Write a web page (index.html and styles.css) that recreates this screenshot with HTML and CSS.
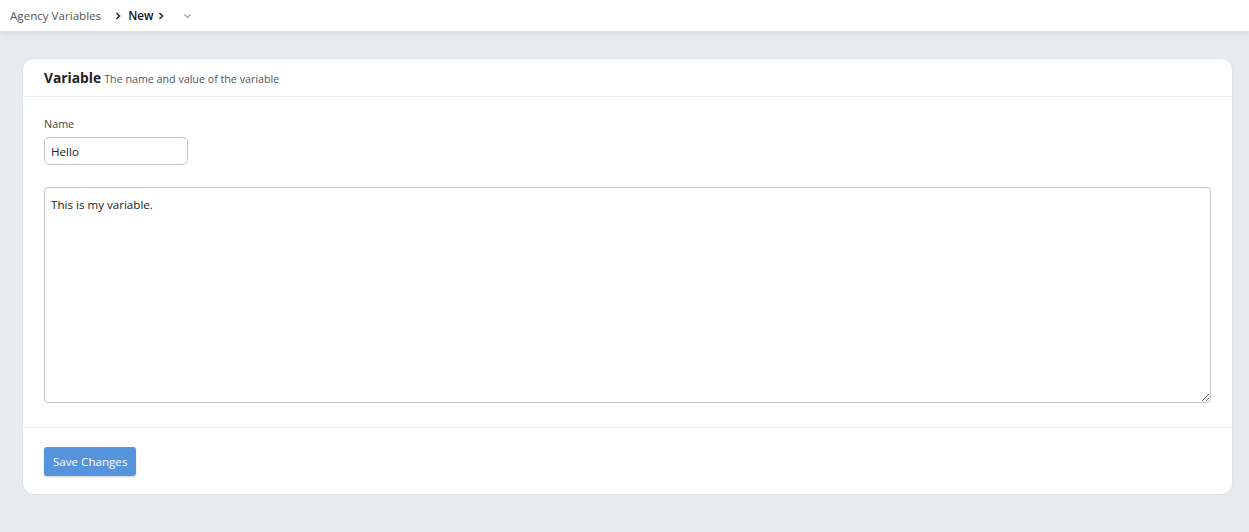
FILE: index.html
```html
<!DOCTYPE html>
<html lang="en">
<head>
    <meta charset="UTF-8">
    <meta name="viewport" content="width=device-width, initial-scale=1.0">
    <title>New Agency Variable</title>
    <link rel="stylesheet" href="styles.css">
</head>
<body>
    <div class="topbar">
        <span class="crumb">Agency Variables</span>
        <svg class="chev" width="8" height="8" viewBox="0 0 8 8"><path d="M2.5 1 L5.5 4 L2.5 7" fill="none" stroke="#333" stroke-width="1.7"/></svg>
        <span class="crumb current">New</span>
        <svg class="chev last" width="8" height="8" viewBox="0 0 8 8"><path d="M2.5 1 L5.5 4 L2.5 7" fill="none" stroke="#333" stroke-width="1.7"/></svg>
        <svg class="down" width="9" height="6" viewBox="0 0 9 6"><path d="M1.5 1.5 L4.5 4.5 L7.5 1.5" fill="none" stroke="#999" stroke-width="1.2"/></svg>
    </div>

    <div class="page">
        <div class="card">
            <div class="card-header">
                <span class="title">Variable</span>
                <span class="subtitle">The name and value of the variable</span>
            </div>
            <div class="card-body">
                <label class="label" for="name">Name</label>
                <input type="text" id="name" class="input" value="Hello">
                <textarea class="textarea">This is my variable.</textarea>
            </div>
            <div class="card-footer">
                <button class="btn">Save Changes</button>
            </div>
        </div>
    </div>
</body>
</html>
```

FILE: styles.css
```css
body {
    margin: 0;
    font-family: "Open Sans", "Noto Sans", sans-serif;
    background: #e8ebee;
    color: #222;
}
.topbar {
    height: 31px;
    background: #fff;
    display: flex;
    align-items: center;
    padding: 0 10px;
    box-shadow: 0 2px 6px rgba(0, 0, 0, 0.08);
    font-size: 11.6px;
}
.crumb {
    color: #555;
}
.crumb.current {
    color: #111;
    font-weight: 600;
}
.chev {
    margin: 0 6px 0 13px;
}
.chev.last {
    margin-left: 4px;
}
.down {
    margin-left: 12px;
}
.page {
    padding: 27px 16px 38px 22px;
}
.card {
    background: #fff;
    border-radius: 12px;
    border: 1px solid #e0e3e8;
}
.card-header {
    height: 37px;
    padding: 0 21px;
    display: flex;
    align-items: center;
    border-bottom: 1px solid #ebedf5;
}
.title {
    font-size: 13.8px;
    font-weight: 700;
    color: #222;
    margin-right: 3px;
}
.subtitle {
    font-size: 10.7px;
    color: #555;
    margin-top: 2px;
}
.card-body {
    padding: 19px 21px 24px;
    display: flex;
    flex-direction: column;
    align-items: flex-start;
    border-bottom: 1px solid #ebedf5;
}
.label {
    font-size: 10.8px;
    color: #444;
    margin-bottom: 6px;
}
.input {
    width: 144px;
    height: 28px;
    box-sizing: border-box;
    border: 1px solid #c6c6c6;
    border-radius: 5px;
    padding: 0 6px;
    font-family: inherit;
    font-size: 11.6px;
    color: #222;
    margin-bottom: 22px;
}
.textarea {
    width: 100%;
    height: 216px;
    box-sizing: border-box;
    border: 1px solid #c6c6c6;
    border-radius: 4px;
    padding: 9px 6px;
    font-family: inherit;
    font-size: 11.6px;
    color: #222;
}
.card-footer {
    padding: 19px 21px 18px;
}
.btn {
    background: #5593dd;
    color: #fff;
    border: none;
    border-radius: 3px;
    height: 29px;
    padding: 0 9px;
    font-family: inherit;
    font-size: 11.6px;
    box-shadow: 0 1px 2px rgba(0, 0, 0, 0.2);
}
```
